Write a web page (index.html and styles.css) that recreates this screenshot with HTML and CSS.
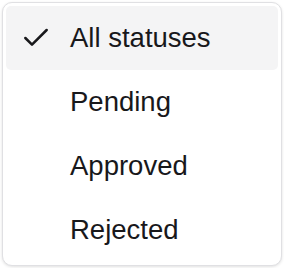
FILE: index.html
```html
<!DOCTYPE html>
<html lang="en">
<head>
  <meta charset="UTF-8">
  <meta name="viewport" content="width=device-width, initial-scale=1.0">
  <title>Status filter</title>
  <link rel="stylesheet" href="styles.css">
</head>
<body>
  <div class="StatusMenu" role="listbox">
    <div class="StatusItem StatusItem-ativo" role="option" aria-selected="true">
      <span class="StatusCheck">
        <svg viewBox="0 0 24 24" width="32" height="32" fill="none" stroke="currentColor" stroke-width="1.9" stroke-linecap="round" stroke-linejoin="round"><path d="M20 6 9 17l-5-5"/></svg>
      </span>
      <span class="StatusTexto">All statuses</span>
    </div>
    <div class="StatusItem" role="option">
      <span class="StatusCheck"></span>
      <span class="StatusTexto">Pending</span>
    </div>
    <div class="StatusItem" role="option">
      <span class="StatusCheck"></span>
      <span class="StatusTexto">Approved</span>
    </div>
    <div class="StatusItem" role="option">
      <span class="StatusCheck"></span>
      <span class="StatusTexto">Rejected</span>
    </div>
  </div>
</body>
</html>
```

FILE: styles.css
```css
body {
  margin: 0;
  background-color: #fff;
  font-family: "Liberation Sans", Arial, sans-serif;
}
.StatusMenu {
  margin: 2px;
  width: 280px;
  box-sizing: border-box;
  border: 1px solid #e0e0e3;
  border-radius: 10px;
  padding: 3px;
  background-color: #fff;
  box-shadow: 0 1px 3px rgba(0, 0, 0, 0.12);
}
.StatusItem {
  display: flex;
  align-items: center;
  height: 64px;
  padding-left: 14px;
  border-radius: 5px;
  color: #18181b;
  font-size: 27.5px;
}
.StatusItem-ativo {
  background-color: #f4f4f5;
}
.StatusCheck {
  display: flex;
  width: 32px;
  height: 32px;
  margin-right: 18px;
}
.StatusTexto {
  line-height: 1;
}
```
